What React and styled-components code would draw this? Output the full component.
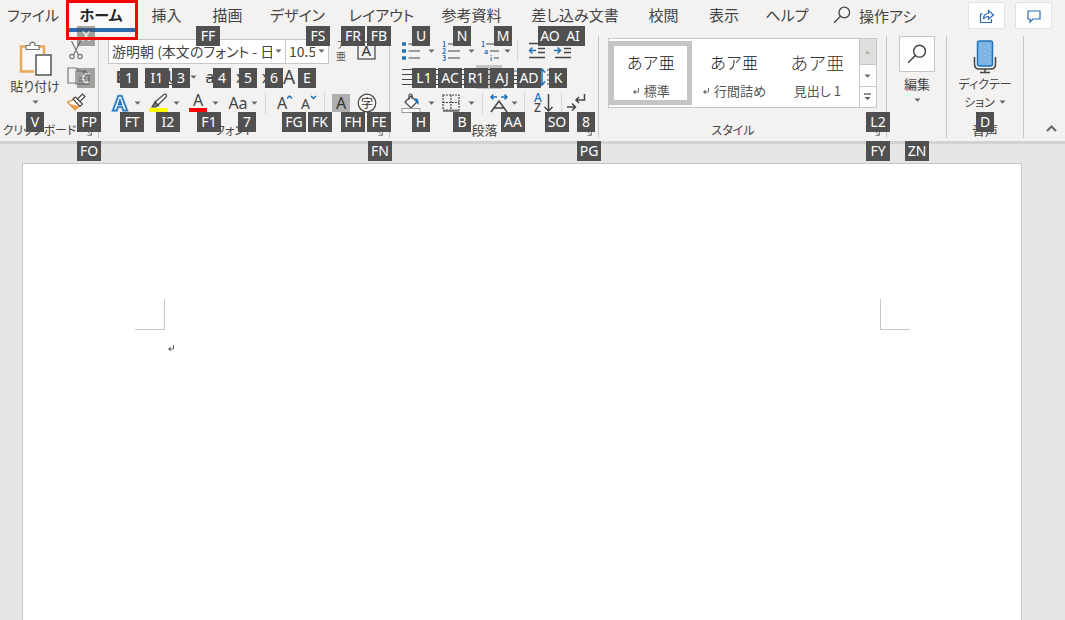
import React from 'react';
import styled, { createGlobalStyle, css } from 'styled-components';

const GlobalStyle = createGlobalStyle`
  * {
    box-sizing: border-box;
  }

  html, body, #root {
    height: 100%;
    margin: 0;
  }

  body {
    background: #e6e6e6;
    color: #444444;
    font-family: "Noto Sans CJK JP", "Noto Sans", sans-serif;
    font-feature-settings: "palt";
    font-size: 13px;
    overflow: hidden;
  }

  svg {
    overflow: visible;
  }

  button, select, input {
    margin: 0;
    padding: 0;
    border: 0;
    background: none;
    color: inherit;
    font: inherit;
    font-feature-settings: inherit;
  }
`;

const BLUE = '#1e73be';

const Window = styled.div`
  display: flex;
  flex-direction: column;
  height: 100vh;
`;

const Header = styled.header`
  flex: none;
  background: #f3f2f1;
  border-bottom: 3px solid #d2d2d2;
`;

/* ---------- tabs ---------- */

const TabBar = styled.nav`
  display: flex;
  height: 36px;
`;

const Tab = styled.button`
  position: relative;
  flex: none;
  display: flex;
  justify-content: center;
  width: ${({ $width }) => $width}px;
  height: 32px;
  font-size: 15px;
  line-height: 30px;
  white-space: nowrap;

  ${({ $active }) => $active && css`
    background: #faf9f8;
    border-bottom: 4px solid #2b6cb0;
    color: #262626;
    font-weight: 700;
  `}
`;

const Highlight = styled.span`
  position: absolute;
  top: 0;
  left: 0;
  right: -2px;
  height: 40px;
  border: 3px solid #ff0000;
  z-index: 5;
`;

const Search = styled.label`
  display: flex;
  align-items: center;
  gap: 8px;
  height: 30px;
  padding-left: 13px;
`;

const SearchInput = styled.input`
  width: 57px;
  font-size: 15px;
  outline: none;

  &::placeholder {
    color: #444444;
    opacity: 1;
  }
`;

const WindowActions = styled.div`
  display: flex;
  gap: 10px;
  margin-left: auto;
  padding: 2px 13px 0 0;
`;

const ActionButton = styled.button`
  display: grid;
  place-items: center;
  width: 37px;
  height: 27px;
  background: #ffffff;
  border: 1px solid #e4e2e0;
  border-radius: 2px;
`;

/* ---------- ribbon ---------- */

const Ribbon = styled.div`
  display: flex;
  height: 105px;
  padding-bottom: 3px;
`;

const Group = styled.section`
  position: relative;
  display: flex;
  flex-direction: column;
  flex: ${({ $grow }) => ($grow ? '1 1 0' : 'none')};
  width: ${({ $width }) => ($width ? `${$width}px` : 'auto')};
  border-right: 1px solid #c8c6c4;
`;

const GroupBody = styled.div`
  display: flex;
  height: 88px;
  padding: 2px 0 0 ${({ $pad = 0 }) => $pad}px;
`;

const GroupLabel = styled.div`
  height: 16px;
  padding-right: ${({ $launcher }) => ($launcher ? 19 : 0)}px;
  font-size: ${({ $compact }) => ($compact ? 12 : 13)}px;
  line-height: 16px;
  text-align: center;
  white-space: nowrap;
`;

const Launcher = styled.button`
  position: absolute;
  right: 6px;
  bottom: 2px;
  width: 8px;
  height: 8px;
  display: grid;
`;

const Rows = styled.div`
  display: grid;
  grid-template-rows: repeat(3, 26px);
`;

const Row = styled.div`
  display: flex;
  align-items: center;
`;

const Tool = styled.button`
  flex: none;
  display: grid;
  place-items: center;
  width: ${({ $width = 26 }) => $width}px;
  height: 24px;
  background: ${({ $on }) => ($on ? '#c8c6c4' : 'none')};
  opacity: ${({ disabled }) => (disabled ? 0.7 : 1)};
`;

const Glyph = styled.span`
  font-family: "Noto Sans", sans-serif;
  font-size: ${({ $large }) => ($large ? 19 : 16)}px;
  line-height: 24px;
  font-weight: ${({ $bold }) => ($bold ? 700 : 400)};
  font-style: ${({ $italic }) => ($italic ? 'italic' : 'normal')};
  text-decoration: ${({ $line = 'none' }) => $line};
`;

const SplitTool = styled.div`
  flex: none;
  display: flex;
  margin-right: 5px;
`;

const Divider = styled.span`
  flex: none;
  width: 1px;
  height: 22px;
  margin: 0 ${({ $gap = 6 }) => $gap}px;
  background: #dad8d6;
`;

const SelectBox = styled.div`
  position: relative;
  width: ${({ $width }) => $width}px;
  height: 25px;
  margin-right: -1px;
  background: #ffffff;
  border: 1px solid #c8c6c4;
`;

const Select = styled.select`
  display: block;
  width: calc(100% - 12px);
  height: 23px;
  padding-left: 3px;
  appearance: none;
  font-size: 14px;
  overflow: hidden;
`;

const SelectCaret = styled.span`
  position: absolute;
  top: 0;
  right: 1px;
  width: 12px;
  height: 23px;
  display: grid;
  place-items: center;
  background: #ffffff;
  pointer-events: none;
`;

const BigButton = styled.button`
  flex: none;
  display: flex;
  flex-direction: column;
  align-items: center;
  width: ${({ $width }) => $width}px;
  padding-top: 3px;
  font-size: ${({ $compact }) => ($compact ? 12 : 13)}px;
  line-height: 18px;
  white-space: nowrap;
`;

const BigCaret = styled.span`
  display: grid;
  place-items: center;
  height: 14px;
`;

const CaretLine = styled.span`
  display: flex;
  align-items: center;
  gap: 4px;
`;

const IconFrame = styled.span`
  display: grid;
  place-items: center;
  width: 36px;
  height: 36px;
  margin: -5px 0 3px;
  background: #ffffff;
  border: 1px solid #c8c6c4;
`;

const Gallery = styled.div`
  display: flex;
  flex: 1;
  height: 70px;
  margin-right: 9px;
  background: #ffffff;
  border: 1px solid #c8c6c4;
`;

const StyleCard = styled.button`
  flex: 1;
  display: flex;
  flex-direction: column;
  align-items: center;
  justify-content: space-between;
  margin: 2px 0;
  padding: 4px 0 0;
  border: 5px solid ${({ $active }) => ($active ? '#c5c5c5' : 'transparent')};
  white-space: nowrap;
`;

const Sample = styled.span`
  font-size: ${({ $large }) => ($large ? 18 : 16)}px;
  line-height: 24px;
  font-weight: 300;
  font-feature-settings: normal;
  color: ${({ $large }) => ($large ? '#333333' : '#111111')};
`;

const StyleName = styled.span`
  display: flex;
  align-items: center;
  gap: 4px;
  font-size: 13px;
  line-height: 18px;
  color: #555555;
`;

const GalleryNav = styled.div`
  display: grid;
  grid-template-rows: 25px 22px 21px;
  width: 17px;
  border-left: 1px solid #c8c6c4;
`;

const NavButton = styled.button`
  display: grid;
  place-items: center;
  background: ${({ disabled }) => (disabled ? '#e1dfdd' : '#ffffff')};

  & + & {
    border-top: 1px solid #c8c6c4;
  }
`;

const Collapse = styled.button`
  align-self: flex-end;
  width: 41px;
  height: 16px;
  padding: 0 0 3px 13px;
  display: grid;
  place-items: center;
`;

/* ---------- access key badges ---------- */

const TIP_TOPS = [-10, 32, 76, 105];

const KeyTip = styled.kbd`
  position: absolute;
  z-index: 4;
  top: ${({ $row }) => TIP_TOPS[$row]}px;
  ${({ $side = 'left' }) => $side}: ${({ $x }) => $x}px;
  width: ${({ $wide }) => ($wide ? 24 : 18)}px;
  height: 20px;
  background: #505050;
  color: #ffffff;
  font-family: "Noto Sans", sans-serif;
  font-size: 14px;
  line-height: 20px;
  text-align: center;
  opacity: ${({ $dim }) => ($dim ? 0.5 : 1)};
`;

/* ---------- document ---------- */

const Workspace = styled.main`
  flex: 1;
  display: flex;
  padding: 19px 43px 0 22px;
  background: #e6e6e6;
`;

const Page = styled.article`
  flex: 1;
  padding: 135px 111px 0 112px;
  background: #ffffff;
  border: 1px solid #c6c6c6;
  border-bottom: 0;
`;

const Margins = styled.div`
  display: flex;
  justify-content: space-between;
`;

const Corner = styled.span`
  width: 30px;
  height: 31px;
  border-bottom: 1px solid #c8c8c8;
  border-${({ $side }) => $side}: 1px solid #c8c8c8;
`;

const Paragraph = styled.p`
  margin: 12px 0 0 32px;
  line-height: 10px;
`;

/* ---------- icons ---------- */

const Svg = ({ w = 18, h = 18, children, ...rest }) => (
  <svg width={w} height={h} viewBox={`0 0 ${w} ${h}`} fill="none" stroke="#444444" strokeWidth="1.2" aria-hidden="true" {...rest}>
    {children}
  </svg>
);

const Caret = ({ color = '#666666' }) => (
  <Svg w={7} h={4} stroke="none"><path d="M0.5 0.5h6L3.5 3.7z" fill={color} /></Svg>
);

const ReturnMark = () => (
  <Svg w={8} h={8} stroke="#666666" strokeWidth="1"><path d="M6.5 1v4H2" /><path d="M3.5 2.5v5L1 5z" fill="#666666" stroke="none" /></Svg>
);

const Magnifier = ({ size = 18 }) => (
  <svg width={size} height={size} viewBox="0 0 18 18" fill="none" stroke="#444444" strokeWidth="1.3" aria-hidden="true">
    <circle cx="11.3" cy="6.5" r="5.3" />
    <path d="M7.5 10.3L1 16.8" />
  </svg>
);

const PasteIcon = () => (
  <Svg w={28} h={36}>
    <path d="M5 5.5H0v25h13M18 5.5h5V13" stroke="#e8a858" strokeWidth="2.4" />
    <rect x="2" y="8" width="19" height="20" fill="#fafafa" stroke="none" />
    <path d="M5 8.5v-4h4c0-4.5 5-4.5 5 0h4v4z" fill="#ffffff" stroke="#777777" />
    <rect x="15" y="14" width="15" height="20" fill="#ffffff" stroke="#555555" strokeWidth="1.5" />
  </Svg>
);

const CutIcon = () => (
  <Svg w={14} h={20}>
    <path d="M2.500 1l7 14M11.500 1l-7 14" />
    <circle cx="3" cy="16.500" r="2.200" />
    <circle cx="11" cy="16.500" r="2.200" />
  </Svg>
);

const CopyIcon = () => (
  <Svg w={22} h={18}>
    <path d="M8 16H0V1h8l2 2" />
    <path d="M8 4h9l4 4v9H8zM16 4v4h4M11 11h7M11 14h7" />
  </Svg>
);

const PainterIcon = () => (
  <Svg w={18} h={18}>
    <path d="M0.500 9l6.500-2.500 6 6L8 17z" fill="#ffffff" stroke="#d98631" />
    <path d="M3 11l9 2-4 4z" fill="#f0a04b" stroke="none" />
    <path d="M6 6l2.500-2 7 7-2.500 2.500z" fill="#ffffff" />
    <path d="M10.500 6l5-5 2.500 2.500-5 5z" fill="#ffffff" />
  </Svg>
);

const RubyIcon = () => (
  <Svg w={18} h={22} stroke="none">
    <text x="5" y="8" fontSize="9" fill="#555555">ア</text>
    <text x="4" y="20" fontSize="10" fill="#555555">亜</text>
  </Svg>
);

const BoxedA = () => (
  <Svg w={20} h={20}>
    <rect x="1" y="1" width="17" height="17" />
    <text x="4.5" y="15" fontSize="15" fill="#333333" stroke="none" fontFamily="Noto Sans">A</text>
  </Svg>
);

const OutlineA = () => (
  <Svg w={18} h={18} stroke={BLUE}>
    <path d="M2 16.5L7.5 2h3L16 16.5h-3.5L11.3 13H6.7l-1.2 3.5zM9 6l-1.6 4.8h3.2z" stroke="#9cc6ea" strokeWidth="3" />
    <path d="M2 16.5L7.5 2h3L16 16.5h-3.5L11.3 13H6.7l-1.2 3.5zM9 6l-1.6 4.8h3.2z" fill="#ffffff" fillRule="evenodd" strokeWidth="1.5" />
  </Svg>
);

const MarkerIcon = () => (
  <Svg w={20} h={20}>
    <rect x="0" y="15" width="19" height="4" fill="#ffff00" stroke="none" />
    <path d="M6 9l9-7.5c2-1 3.5 1 2 2.5l-8 8z" fill="#ffffff" />
    <path d="M6 9l3.5 3.5-3 1.5H3z" fill="#777777" />
  </Svg>
);

const FontColorIcon = () => (
  <Svg w={18} h={20}>
    <text x="4" y="12.5" fontSize="16" fill="#444444" stroke="none" fontFamily="Noto Sans">A</text>
    <rect x="0" y="15" width="18" height="4" fill="#ff0000" stroke="none" />
  </Svg>
);

const SizeIcon = ({ up }) => (
  <Svg w={18} h={18}>
    <text x="1" y="15" fontSize={up ? 16 : 14} fill="#444444" stroke="none" fontFamily="Noto Sans">A</text>
    <path d={up ? 'M11 4.5L13.5 2l2.500 2.500' : 'M11 2l2.500 2.500L16 2'} stroke={BLUE} strokeWidth="1.500" />
  </Svg>
);

const ShadedA = () => (
  <Svg w={18} h={18}>
    <rect width="18" height="18" fill="#b0b0b0" stroke="none" />
    <text x="4" y="15" fontSize="16" fill="#333333" stroke="none" fontFamily="Noto Sans">A</text>
  </Svg>
);

const CircledChar = () => (
  <Svg w={20} h={20}>
    <circle cx="10" cy="10" r="8.8" />
    <text x="4" y="14.5" fontSize="12" fill="#333333" stroke="none">字</text>
  </Svg>
);

const BulletsIcon = () => (
  <Svg w={18} h={18}>
    <path d="M0 2h4M0 9h4M0 16h4" stroke={BLUE} strokeWidth="3.5" />
    <path d="M6.5 2H18M6.5 9H18M6.5 16H18" />
  </Svg>
);

const NumbersIcon = () => (
  <Svg w={18} h={20}>
    <g fill={BLUE} stroke="none" fontSize="7" fontWeight="700">
      <text x="0" y="6">1</text>
      <text x="0" y="13">2</text>
      <text x="0" y="20">3</text>
    </g>
    <path d="M6 3H18M6 10H18M6 17H18" />
  </Svg>
);

const MultiLevelIcon = () => (
  <Svg w={20} h={20}>
    <g fill={BLUE} stroke="none" fontSize="7" fontWeight="700">
      <text x="0" y="6">1</text>
      <text x="3" y="13">a</text>
      <text x="9" y="20">i</text>
    </g>
    <path d="M5 3H18M9 10H18M13 17H18" />
  </Svg>
);

const IndentIcon = ({ left }) => (
  <Svg w={18} h={18}>
    <path d="M1 1.5h16M10 6.5h7M10 10.500h7M1 15.500h16" strokeWidth="1.500" />
    <path d={left ? 'M8 8.500H1.500M4.500 5.500l-3 3 3 3' : 'M0 8.500h6.500M3.500 5.500l3 3-3 3'} stroke={BLUE} strokeWidth="1.500" />
  </Svg>
);

const LinesIcon = () => <Svg><path d="M0 1.500h18M0 6.500h18M0 11.500h18M0 16.500h18" /></Svg>;

const DistributeIcon = () => (
  <Svg>
    <path d="M0 7.500h18M0 11.500h18M0 15.500h18" />
    <path d="M1 3h16M4 1L1 3l3 2M14 1l3 2-3 2" stroke={BLUE} />
  </Svg>
);

const SpacingIcon = () => (
  <Svg w={20} h={18}>
    <path d="M11 1v16M8 4.500L11 1l3 3.500M8 13.500l3 3.500 3-3.500" stroke={BLUE} strokeWidth="1.500" />
    <path d="M16 2h6M16 7h6M16 12h6M16 16h6" />
  </Svg>
);

const BucketIcon = () => (
  <Svg w={20} h={20}>
    <path d="M4 9l6-6 6 6-6 6z" fill="#ffffff" />
    <path d="M8 7V2.500c0-2 3-2 3 0V6" />
    <path d="M14 5c3 0 4 3 3.500 7l-3-4z" fill={BLUE} stroke="none" />
    <rect x="1" y="15.500" width="18" height="4" fill="#ffffff" stroke="#999999" strokeWidth="1" />
  </Svg>
);

const BordersIcon = () => (
  <Svg>
    <path d="M1 1h16v15H1zM9 1v15M1 8.500h16" strokeDasharray="2 1" />
    <path d="M1 17h16" />
  </Svg>
);

const StretchIcon = () => (
  <Svg w={22} h={20}>
    <path d="M9 4H3M5.500 1.500L3 4l2.500 2.500M13 4h6M16.500 1.500L19 4l-2.500 2.500" stroke={BLUE} strokeWidth="1.500" />
    <path d="M3 19l8-11 8 11M6 15h10" strokeWidth="1.500" />
  </Svg>
);

const SortIcon = () => (
  <Svg w={20} h={20}>
    <g stroke="none" fontSize="12" fontWeight="500" fontFamily="Noto Sans">
      <text x="0" y="9" fill={BLUE}>A</text>
      <text x="0" y="19" fill="#444444">Z</text>
    </g>
    <path d="M14.500 1v17M10.500 14l4 4 4-4" strokeWidth="1.500" />
  </Svg>
);

const MarksIcon = () => (
  <Svg w={20} h={20} strokeWidth="1.500">
    <path d="M18.500 1v6H10M13 4l-3 3 3 3M1 14h8M6 10.500L9.500 14 6 17.500" />
  </Svg>
);

const LauncherIcon = () => (
  <Svg w={8} h={8} stroke="#888888" strokeWidth="1"><path d="M0.500 4V0.500H4M3 3l4 4M7.500 3.500v4h-4" /></Svg>
);

const MicIcon = () => (
  <Svg w={24} h={34}>
    <path d="M1.500 16v7c0 3.500 2 5 4.500 5h12c2.500 0 4.500-1.500 4.500-5v-7M12 28v4M7 31.500h10" strokeWidth="1.500" />
    <rect x="4.500" y="0" width="15" height="25" rx="2" fill="#7cb5e3" stroke={BLUE} strokeWidth="1.500" />
    <path d="M8 4v18M12 6v15M16 4v18" stroke="#b5d6f0" strokeWidth="1" strokeDasharray="1 3" />
  </Svg>
);

const ShareIcon = () => (
  <Svg w={16} h={16} stroke="#2b6cb0">
    <path d="M4 6H1.500v8.500h11V11" />
    <path d="M4.500 11c0-4 2-5.500 5-5.500V2.500L14.500 7l-5 4V8.500C7 8.500 5.500 9 4.500 11z" />
  </Svg>
);

const CommentIcon = () => (
  <Svg w={14} h={14} stroke="#2b6cb0"><path d="M1 2h12v8H6l-3 3v-3H1z" /></Svg>
);

/* ---------- data ---------- */

const tabs = [
  { name: 'ファイル', width: 66 },
  { name: 'ホーム', width: 70, active: true },
  { name: '挿入', width: 61 },
  { name: '描画', width: 61 },
  { name: 'デザイン', width: 79 },
  { name: 'レイアウト', width: 89 },
  { name: '参考資料', width: 91 },
  { name: '差し込み文書', width: 116 },
  { name: '校閲', width: 61 },
  { name: '表示', width: 60 },
  { name: 'ヘルプ', width: 66 },
];

// [key, row, x inside the group]
const clipboardTips = [['V', 2, 26], ['FP', 2, 77], ['FO', 3, 77]];
const fontTips = [
  ['FF', 0, 97], ['FS', 0, 207], ['FR', 0, 242], ['FB', 0, 268],
  ['1', 1, 21], ['I1', 1, 46], ['3', 1, 73], ['4', 1, 114], ['5', 1, 140], ['6', 1, 166], ['E', 1, 199],
  ['FT', 2, 21], ['I2', 2, 57], ['F1', 2, 98], ['7', 2, 139], ['FG', 2, 183], ['FK', 2, 209], ['FH', 2, 242], ['FE', 2, 268],
  ['FN', 3, 269],
];
const paragraphTips = [
  ['U', 0, 22], ['N', 0, 63], ['M', 0, 104], ['AO', 0, 148], ['AI', 0, 171],
  ['L1', 1, 22], ['AC', 1, 48], ['R1', 1, 74], ['AJ', 1, 100], ['AD', 1, 127], ['K', 1, 159],
  ['H', 2, 22], ['B', 2, 63], ['AA', 2, 111], ['SO', 2, 155], ['8', 2, 187],
  ['PG', 3, 187],
];

const Tips = ({ items, side }) =>
  items.map(([key, row, x]) => (
    <KeyTip key={key} $row={row} $x={x} $side={side} $wide={key.length > 1}>{key}</KeyTip>
  ));

const CaretTool = ({ width = 14, label }) => (
  <Tool $width={width} aria-label={label}><Caret /></Tool>
);

const ColorTool = ({ label, children }) => (
  <SplitTool>
    <Tool $width={24} aria-label={label}>{children}</Tool>
    <CaretTool width={10} label={`${label}の種類`} />
  </SplitTool>
);

const DialogLauncher = ({ label }) => (
  <Launcher aria-label={label}><LauncherIcon /></Launcher>
);

/* ---------- groups ---------- */

const ClipboardGroup = () => (
  <Group $width={99}>
    <GroupBody $pad={8}>
      <BigButton $width={54}>
        <PasteIcon />
        <span>貼り付け</span>
        <BigCaret><Caret /></BigCaret>
      </BigButton>
      <Rows>
        <Tool $width={28} disabled aria-label="切り取り"><CutIcon /></Tool>
        <Tool $width={34} disabled aria-label="コピー"><CopyIcon /></Tool>
        <Tool $width={28} aria-label="書式のコピー"><PainterIcon /></Tool>
      </Rows>
    </GroupBody>
    <GroupLabel $launcher $compact>クリップボード</GroupLabel>
    <DialogLauncher label="クリップボードの設定" />
    <KeyTip $row={0} $x={77} $dim>X</KeyTip>
    <KeyTip $row={1} $x={77} $dim>C</KeyTip>
    <Tips items={clipboardTips} />
  </Group>
);

const FontGroup = () => (
  <Group $width={291}>
    <GroupBody $pad={9}>
      <Rows>
        <Row>
          <SelectBox $width={178}>
            <Select aria-label="フォント"><option>游明朝 (本文のフォント - 日本語)</option></Select>
            <SelectCaret><Caret /></SelectCaret>
          </SelectBox>
          <SelectBox $width={44}>
            <Select aria-label="フォント サイズ"><option>10.5</option></Select>
            <SelectCaret><Caret /></SelectCaret>
          </SelectBox>
          <Tool aria-label="ルビ"><RubyIcon /></Tool>
          <Tool aria-label="囲み線"><BoxedA /></Tool>
        </Row>
        <Row>
          <Tool aria-label="太字"><Glyph $bold>B</Glyph></Tool>
          <Tool aria-label="斜体"><Glyph $italic>I</Glyph></Tool>
          <Tool aria-label="下線"><Glyph $line="underline">U</Glyph></Tool>
          <CaretTool label="下線の種類" />
          <Tool $width={30} aria-label="取り消し線"><Glyph $line="line-through">ab</Glyph></Tool>
          <Tool aria-label="下付き"><Glyph>x₂</Glyph></Tool>
          <Tool aria-label="上付き"><Glyph>x²</Glyph></Tool>
          <Tool $width={14} aria-label="書式のクリア"><Glyph $large>A</Glyph></Tool>
        </Row>
        <Row>
          <ColorTool label="文字の効果"><OutlineA /></ColorTool>
          <ColorTool label="蛍光ペン"><MarkerIcon /></ColorTool>
          <ColorTool label="フォントの色"><FontColorIcon /></ColorTool>
          <Tool aria-label="文字種の変換"><Glyph>Aa</Glyph></Tool>
          <Caret />
          <Divider $gap={7} />
          <Tool $width={24} aria-label="拡大"><SizeIcon up /></Tool>
          <Tool $width={24} aria-label="縮小"><SizeIcon /></Tool>
          <Divider $gap={3} />
          <Tool aria-label="文字の網かけ"><ShadedA /></Tool>
          <Tool aria-label="囲い文字"><CircledChar /></Tool>
        </Row>
      </Rows>
    </GroupBody>
    <GroupLabel $launcher $compact>フォント</GroupLabel>
    <DialogLauncher label="フォントの設定" />
    <Tips items={fontTips} />
  </Group>
);

const ParagraphGroup = () => (
  <Group $width={209}>
    <GroupBody $pad={8}>
      <Rows>
        <Row>
          <Tool aria-label="箇条書き"><BulletsIcon /></Tool>
          <CaretTool label="行頭文字" />
          <Tool aria-label="段落番号"><NumbersIcon /></Tool>
          <CaretTool label="番号の書式" />
          <Tool aria-label="アウトライン"><MultiLevelIcon /></Tool>
          <Caret />
          <Divider $gap={6} />
          <Tool aria-label="インデントを減らす"><IndentIcon left /></Tool>
          <Tool aria-label="インデントを増やす"><IndentIcon /></Tool>
        </Row>
        <Row>
          <Tool aria-label="左揃え"><LinesIcon /></Tool>
          <Tool aria-label="中央揃え"><LinesIcon /></Tool>
          <Tool aria-label="右揃え"><LinesIcon /></Tool>
          <Tool $on aria-label="両端揃え"><LinesIcon /></Tool>
          <Tool aria-label="均等割り付け"><DistributeIcon /></Tool>
          <Tool aria-label="行間"><SpacingIcon /></Tool>
        </Row>
        <Row>
          <Tool aria-label="塗りつぶし"><BucketIcon /></Tool>
          <CaretTool label="塗りつぶしの色" />
          <Tool aria-label="罫線"><BordersIcon /></Tool>
          <CaretTool label="罫線の種類" />
          <Divider $gap={4} />
          <Tool $width={24} aria-label="拡張書式"><StretchIcon /></Tool>
          <Caret />
          <Divider $gap={6} />
          <Tool aria-label="並べ替え"><SortIcon /></Tool>
          <Divider $gap={4} />
          <Tool $width={20} aria-label="編集記号"><MarksIcon /></Tool>
        </Row>
      </Rows>
    </GroupBody>
    <GroupLabel $launcher>段落</GroupLabel>
    <DialogLauncher label="段落の設定" />
    <Tips items={paragraphTips} />
  </Group>
);

const StylesGroup = () => (
  <Group $grow>
    <GroupBody $pad={9}>
      <Gallery>
        <StyleCard $active>
          <Sample>あア亜</Sample>
          <StyleName><ReturnMark />標準</StyleName>
        </StyleCard>
        <StyleCard>
          <Sample>あア亜</Sample>
          <StyleName><ReturnMark />行間詰め</StyleName>
        </StyleCard>
        <StyleCard>
          <Sample $large>あア亜</Sample>
          <StyleName>見出し 1</StyleName>
        </StyleCard>
        <GalleryNav>
          <NavButton disabled aria-label="前へ"><Svg w={7} h={4} stroke="none"><path d="M0.5 3.7h6L3.5 0.5z" fill="#b3b0ad" /></Svg></NavButton>
          <NavButton aria-label="次へ"><Caret /></NavButton>
          <NavButton aria-label="その他"><Svg w={7} h={8}><path d="M0 1h7" /><path d="M0.5 4h6L3.5 7z" fill="#555555" stroke="none" /></Svg></NavButton>
        </GalleryNav>
      </Gallery>
    </GroupBody>
    <GroupLabel $launcher $compact>スタイル</GroupLabel>
    <DialogLauncher label="スタイルの設定" />
    <Tips items={[['L2', 2, -4], ['FY', 3, -4]]} side="right" />
  </Group>
);

const EditGroup = () => (
  <Group $width={60}>
    <GroupBody $pad={2}>
      <BigButton $width={56}>
        <IconFrame><Magnifier size={20} /></IconFrame>
        <span>編集</span>
        <BigCaret><Caret /></BigCaret>
      </BigButton>
    </GroupBody>
    <Tips items={[['ZN', 3, 18]]} />
  </Group>
);

const VoiceGroup = () => (
  <Group $width={77}>
    <GroupBody $pad={4}>
      <BigButton $width={68} $compact>
        <MicIcon />
        <span>ディクテー</span>
        <CaretLine>ション<Caret /></CaretLine>
      </BigButton>
    </GroupBody>
    <GroupLabel>音声</GroupLabel>
    <Tips items={[['D', 2, 29]]} />
  </Group>
);

const App = () => {
  return (
    <>
      <GlobalStyle />
      <Window>
        <Header>
          <TabBar>
            {tabs.map((tab) => (
              <Tab key={tab.name} $width={tab.width} $active={tab.active}>
                {tab.name}
                {tab.active && <Highlight />}
              </Tab>
            ))}
            <Search>
              <Magnifier />
              <SearchInput type="text" placeholder="操作アシスト" aria-label="操作アシスト" />
            </Search>
            <WindowActions>
              <ActionButton aria-label="共有"><ShareIcon /></ActionButton>
              <ActionButton aria-label="コメント"><CommentIcon /></ActionButton>
            </WindowActions>
          </TabBar>
          <Ribbon>
            <ClipboardGroup />
            <FontGroup />
            <ParagraphGroup />
            <StylesGroup />
            <EditGroup />
            <VoiceGroup />
            <Collapse aria-label="リボンを折りたたむ">
              <Svg w={11} h={7} stroke="#666666" strokeWidth="2"><path d="M1 6l4.5-4.5L10 6" /></Svg>
            </Collapse>
          </Ribbon>
        </Header>
        <Workspace>
          <Page>
            <Margins>
              <Corner $side="right" />
              <Corner $side="left" />
            </Margins>
            <Paragraph><ReturnMark /></Paragraph>
          </Page>
        </Workspace>
      </Window>
    </>
  );
};

export default App;
